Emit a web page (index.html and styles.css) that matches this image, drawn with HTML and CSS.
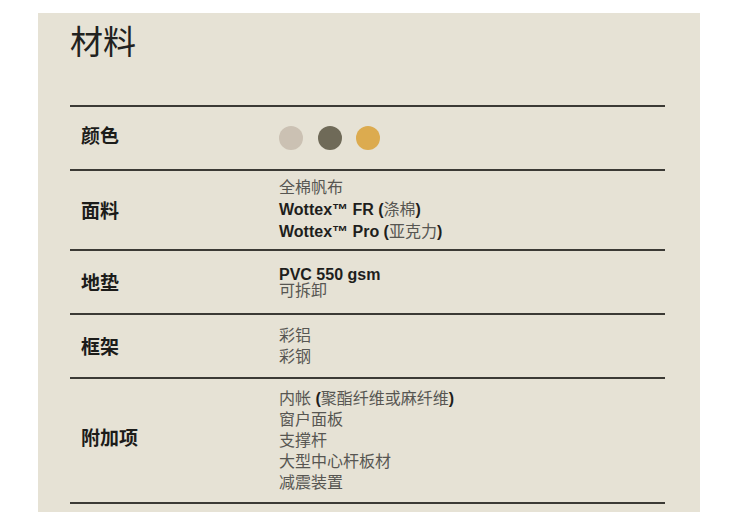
FILE: index.html
```html
<!DOCTYPE html>
<html lang="zh-CN">
<head>
<meta charset="utf-8">
<title>材料</title>
<link rel="stylesheet" href="styles.css">
</head>
<body>
<section class="panel">
  <h1 class="title">材料</h1>
  <div class="table">
    <div class="row row-colors">
      <div class="label">颜色</div>
      <div class="value dots">
        <span class="dot dot-sand"></span>
        <span class="dot dot-olive"></span>
        <span class="dot dot-gold"></span>
      </div>
    </div>
    <div class="row row-fabric">
      <div class="label">面料</div>
      <div class="value">
        <div class="line">全棉帆布</div>
        <div class="line"><b>Wottex™ FR (</b>涤棉<b>)</b></div>
        <div class="line"><b>Wottex™ Pro (</b>亚克力<b>)</b></div>
      </div>
    </div>
    <div class="row row-floor">
      <div class="label">地垫</div>
      <div class="value tight">
        <div class="line"><b>PVC 550 gsm</b></div>
        <div class="line">可拆卸</div>
      </div>
    </div>
    <div class="row row-frame">
      <div class="label">框架</div>
      <div class="value">
        <div class="line">彩铝</div>
        <div class="line">彩钢</div>
      </div>
    </div>
    <div class="row row-extras">
      <div class="label">附加项</div>
      <div class="value">
        <div class="line">内帐 <b>(</b>聚酯纤维或麻纤维<b>)</b></div>
        <div class="line">窗户面板</div>
        <div class="line">支撑杆</div>
        <div class="line">大型中心杆板材</div>
        <div class="line">减震装置</div>
      </div>
    </div>
  </div>
</section>
</body>
</html>
```

FILE: styles.css
```css
html, body {
  margin: 0;
  padding: 0;
  background: #ffffff;
}

body {
  padding: 13px 38px 13px 38px;
  font-family: "Liberation Sans", "Noto Sans CJK SC", sans-serif;
}

.panel {
  background: #e6e2d5;
  height: 499px;
  box-sizing: border-box;
  padding: 11px 35px 0 32px;
}

.title {
  margin: 0 0 48px 0;
  font-family: "Noto Sans CJK SC", sans-serif;
  font-size: 33px;
  line-height: 33px;
  font-weight: 400;
  color: #222220;
}

.table {
  border-bottom: 2px solid #3b3a35;
}

.row {
  display: grid;
  grid-template-columns: 198px 1fr;
  align-items: center;
  min-height: 64px;
  box-sizing: border-box;
  padding: 10px 0 10px 11px;
  border-top: 2px solid #3b3a35;
}

.row-colors .label {
  margin-top: -6px;
}

.row-fabric {
  padding-top: 6px;
  padding-bottom: 6px;
}

.row-frame {
  min-height: 63px;
}

.row-extras {
  padding-top: 9px;
  padding-bottom: 9px;
}

.row-extras .label {
  margin-top: -8px;
}

.label {
  font-family: "Noto Sans CJK SC", sans-serif;
  font-size: 19px;
  font-weight: 700;
  color: #1c1c1a;
  line-height: 24px;
}

.value {
  font-size: 16px;
  line-height: 21px;
  color: #575652;
}

.row-fabric .value {
  line-height: 22px;
}

.value b {
  font-weight: 700;
  color: #1e1e1c;
}

.value.tight {
  margin-top: 2px;
}

.value.tight .line {
  line-height: 16px;
}

.dots {
  display: flex;
  gap: 14.5px;
}

.dot {
  width: 24px;
  height: 24px;
  border-radius: 50%;
}

.dot-sand { background: #cbc1b3; }
.dot-olive { background: #6f6a58; }
.dot-gold { background: #dcab4f; }
```
